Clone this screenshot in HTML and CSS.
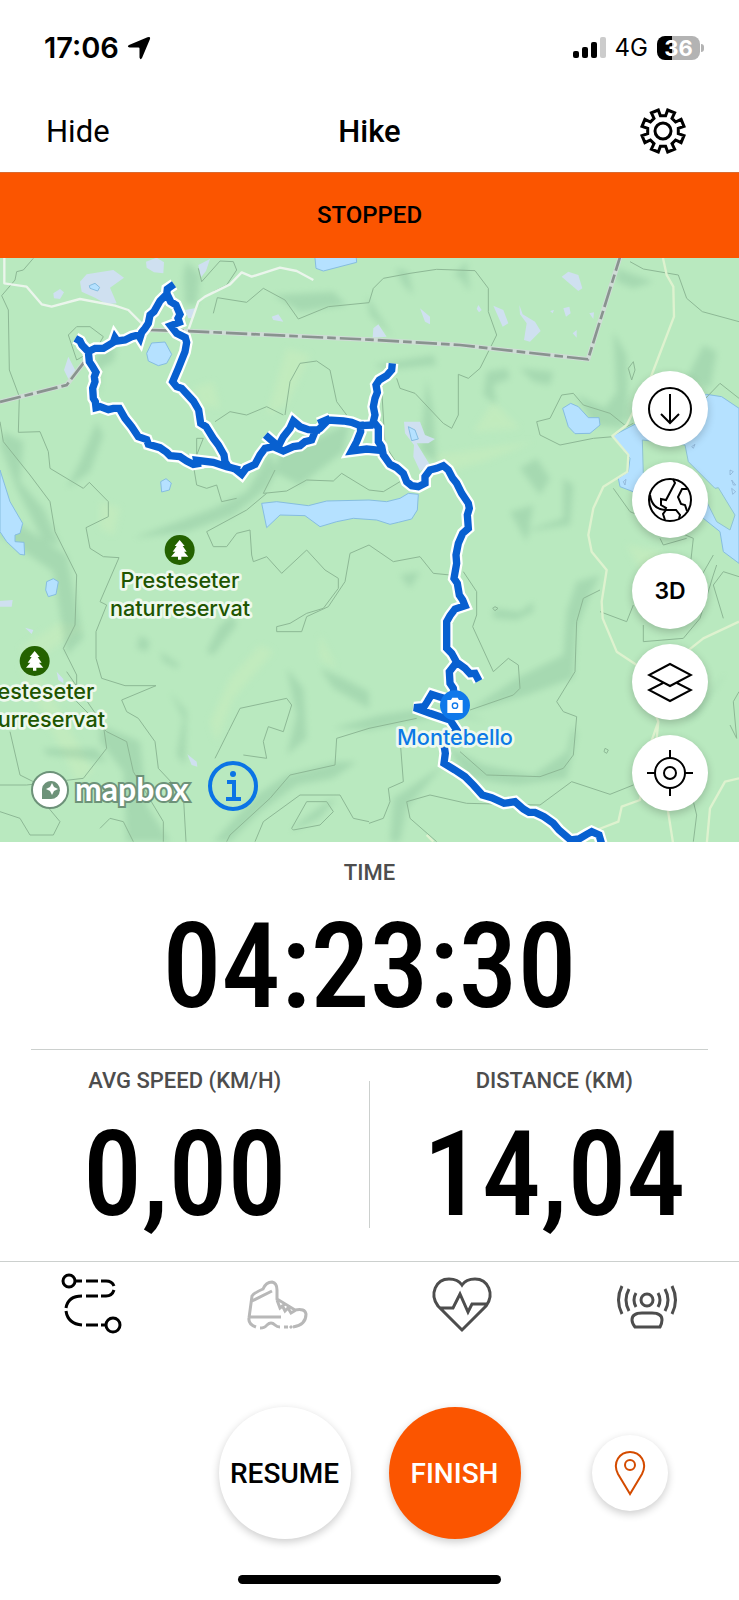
FILE: index.html
```html
<!DOCTYPE html>
<html lang="en">
<head>
<meta charset="utf-8">
<meta name="viewport" content="width=device-width, initial-scale=1">
<title>Hike</title>
<link rel="stylesheet" href="styles.css">
</head>
<body>
<div class="app">
  <div class="status">
    <div class="status-group">
      <span class="clock">17:06</span>
      <svg class="location" viewBox="0 0 24 24" aria-hidden="true"><path d="M20.500 1.200Q24 0 22.800 3.500L15 22Q13.500 24.500 12.500 21.500V12.500Q12.500 11.500 11.500 11.500H2.500Q-.500 10.500 2 9Z"/></svg>
    </div>
    <div class="status-group status-right">
      <svg class="signal" viewBox="0 0 33 22" aria-hidden="true"><rect y="14" width="6" height="7" rx="2"/><rect x="9" y="10" width="6" height="11" rx="2"/><rect x="18" y="5" width="6" height="16" rx="2"/><rect class="weak" x="27" y="0" width="6" height="21" rx="2"/></svg>
      <span class="network">4G</span>
      <span class="battery"><span class="battery-level">36</span></span>
    </div>
  </div>

  <header class="nav">
    <button class="hide" type="button">Hide</button>
    <h1>Hike</h1>
    <button class="settings" type="button" aria-label="Settings">
      <svg viewBox="-23 -23 46 46"><path d="M15.300 2.600 21 4.700 18.100 11.600 12.600 9 9 12.600 11.600 18.100 4.700 21 2.600 15.300H-2.600L-4.700 21-11.600 18.100-9 12.600-12.600 9-18.100 11.600-21 4.700-15.300 2.600V-2.600L-21-4.700-18.100-11.600-12.600-9-9-12.600-11.600-18.100-4.700-21-2.600-15.300H2.600L4.700-21 11.600-18.100 9-12.600 12.600-9 18.100-11.600 21-4.700 15.300-2.600Z"/><circle r="8"/></svg>
    </button>
  </header>

  <div class="banner" role="status">STOPPED</div>

  <section class="map" aria-label="Map">
    <svg class="map-art" viewBox="0 9 2217 1752" preserveAspectRatio="xMidYMid slice">
      <defs>
        <filter id="soft" x="-20%" y="-20%" width="140%" height="140%"><feGaussianBlur stdDeviation="9"/></filter>
        <path id="route" d="M226 250 240 258 246 270 265 290 268 320 276 332 288 352 283 365 285 380 278 400 280 430 286 440 288 458 300 455 325 464 340 460 358 460 375 490 395 515 415 545 440 554 445 568 480 578 500 592 510 602 540 605 560 618 580 628 592 626 590 616 640 622 680 635 720 645M265 290 285 280 310 280 340 262 345 248 352 258 375 255 395 245 415 240 420 248 425 232 435 220 445 205 450 180 462 170 480 138 500 118 502 102 522 88M500 115 512 140 528 150 540 178 534 190 538 202 512 212 530 235 556 248 560 262 555 290 535 340 518 380 530 395 545 400 580 438 596 465 602 505 618 515 640 550 655 570 672 600 675 620 685 635 705 642 725 658 738 640 765 628 780 600 795 580 820 575 850 588 880 575 900 572 915 560 935 555 945 530 960 520 985 495 1030 498 1055 502 1080 512 1120 510M796 540 835 574 850 545 870 520 880 498 900 515 925 524 960 525M955 505 990 490M1080 500 1082 530 1070 560 1055 588 1100 582 1140 586M1177 325 1175 345 1160 362 1138 375 1128 390 1132 412 1125 430 1120 455 1125 480 1120 500 1135 518 1135 560 1145 575 1150 600 1170 628 1190 638 1210 655 1220 680 1235 692 1255 695 1275 685 1275 665 1290 645 1310 640 1330 632 1345 645 1358 670 1370 685 1385 715 1405 745 1408 760 1402 780 1405 820 1388 835 1375 865 1368 900 1370 925 1362 970 1372 985 1378 1020 1388 1035 1395 1052 1365 1062 1350 1082 1340 1100 1340 1180 1355 1195 1370 1222 1348 1250 1350 1285 1360 1300 1365 1340M1370 1222 1395 1240 1410 1256 1425 1255 1437 1278M1350 1335 1317 1325 1295 1318 1282 1340 1272 1355 1243 1358 1290 1375 1350 1395 1370 1425 1332 1470 1336 1495 1332 1525 1365 1545 1395 1565 1420 1590 1447 1620 1475 1628 1512 1645 1545 1640 1570 1662 1587 1672 1605 1672 1632 1685 1660 1705 1677 1725 1712 1755 1737 1752 1760 1738 1775 1730 1797 1740 1806 1770"/>
        <g id="tree"><circle r="45" class="park-dot"/><path class="park-tree" d="M0-30 15-12H9L21 5H13L26 20H5V29H-5V20H-26L-13 5H-21L-9-12H-15Z"/></g>
      </defs>
      <rect class="land" y="0" width="2217" height="1770"/>

      <g class="light" filter="url(#soft)">
        <path d="M860 280 930 300 860 450 800 480ZM580 400 640 380 660 460 600 450ZM180 1100 250 1120 100 1220 60 1180ZM60 1230 120 1260 280 1550 230 1580ZM1300 600 1600 560 1450 620 1340 650ZM780 1170 820 1190 700 1330 650 1460 630 1400 690 1270ZM960 1140 1010 1240 960 1210ZM300 740 360 760 340 840 300 820ZM1880 870 1990 890 1930 960ZM1480 440 1560 520 1420 530Z"/>
      </g>
      <g class="shade" filter="url(#soft)">
        <path d="M810 590 830 650 800 700 700 780 560 830 400 850 480 820 640 760 740 710Z"/>
        <path d="M840 590 930 560 1050 500 1030 590 900 690 820 650Z"/>
        <path d="M290 500 310 540 270 650 200 700 240 620Z"/>
        <path d="M350 270 340 320 300 340 300 420 280 360 290 290Z"/>
        <path d="M1100 120 1180 250 1110 180ZM1185 40 1225 50 1240 120 1210 90ZM1840 230 1880 300 1885 500 1800 480 1850 410Z"/>
        <path d="M1360 60 1400 20 1410 110 1380 70ZM1120 330 1300 300 1310 330 1160 345ZM1310 620 1260 590 1280 370 1300 470Z"/>
        <path d="M1460 350 1520 340 1530 370 1480 390 1490 450 1450 420ZM1560 340 1660 350 1650 390 1600 380ZM1730 420 1840 470 1880 520 1780 510Z"/>
        <path d="M1560 640 1610 610 1650 670 1620 720ZM1690 670 1720 690 1710 810 1570 830 1690 790ZM1530 770 1600 750 1580 860Z"/>
        <path d="M1730 980 1800 960 1770 1020 1730 1120 1720 1270 1580 1320 1400 1370 1550 1270 1690 1200 1700 1070Z"/>
        <path d="M1480 1060 1560 1070 1600 1040 1600 1070 1550 1095 1480 1090ZM1460 1400 1380 1370 1107 1425 1000 1420 1140 1380 1280 1360Z"/>
        <path d="M1340 1470 1450 1530 1600 1560 1700 1490 1720 1410 1730 1440 1700 1570 1550 1590 1400 1570Z"/>
        <path d="M1330 1530 1220 1660 1200 1760 1170 1760 1180 1630Z"/>
        <path d="M1010 1520 1070 1520 1000 1570 890 1590 780 1670 690 1760 640 1760 770 1620 860 1560Z"/>
        <path d="M1010 1630 960 1690 870 1730 900 1700 980 1640ZM860 1240 910 1300 920 1450 860 1500 890 1380ZM960 1240 1030 1270 1107 1310 1107 1360 1000 1300Z"/>
        <path d="M510 1310 560 1370 555 1530 530 1500 550 1390ZM300 1410 420 1460 440 1650 510 1760 380 1760 370 1550 300 1460ZM0 770 200 900 250 1150 200 1200 160 950 0 840Z"/>
        <path d="M10 530 70 560 60 680 130 760 180 870 130 860 50 700 0 570ZM700 1080 710 1110 640 1200 620 1190 660 1110ZM420 1140 450 1160 440 1190 410 1180ZM480 1190 540 1230 530 1240 490 1220ZM130 1480 290 1480 320 1520 140 1500Z"/>
        <path d="M1850 40 1960 80 1900 100 1850 80ZM2110 270 2150 290 2130 400 2060 370ZM2180 1250 2090 1380 2050 1400 2130 1310ZM1200 960 1260 950 1230 1000ZM820 120 1000 110 1040 150 900 170ZM560 20 600 60 590 150 555 150 550 60Z"/>
      </g>

      <g class="wetland">
        <path d="M438 20 470 8 492 22 490 55 462 52 440 38ZM160 115 180 102 192 112 180 132 162 130ZM240 80 260 58 340 45 372 68 330 98 350 145 320 148 285 128 245 110ZM595 30 630 12 618 48 602 68ZM555 165 585 160 582 188 565 190ZM815 185 835 178 850 200 820 195ZM205 305 228 350 205 372 192 345Z"/>
        <path d="M1260 160 1290 185 1290 208 1275 200ZM1120 220 1135 208 1160 245 1118 248ZM1435 150 1445 165 1437 172 1430 162ZM1480 152 1510 165 1525 205 1508 215ZM1558 150 1568 178 1605 200 1622 228 1590 260 1572 255 1580 205 1560 178ZM1690 160 1708 155 1712 175 1698 185ZM1768 175 1782 172 1780 192ZM1718 235 1730 225 1730 248ZM1685 65 1705 50 1735 60 1747 100 1735 108ZM1650 168 1662 165 1658 175Z"/>
        <path d="M1212 500 1260 500 1275 540 1305 552 1285 565 1250 565 1290 630 1260 648 1240 605 1242 570 1215 535ZM0 1038 38 1035 35 1055 0 1055ZM75 1118 100 1125 95 1137ZM562 1498 590 1520 592 1535 575 1530ZM170 1250 190 1272 190 1285 175 1275Z"/>
      </g>
      <g class="water">
        <path d="M440 295 455 264 495 261 515 298 500 325 475 332 445 318ZM945 10 948 40 970 48 1070 22 1068 0 945 0ZM268 92 285 85 299 97 293 108 270 100ZM482 680 498 671 514 684 508 705 485 711ZM785 745 830 740 925 752 980 738 1107 735 1160 740 1200 730 1225 715 1255 718 1252 765 1235 792 1195 802 1170 808 1130 795 1060 790 1010 800 960 815 915 782 840 780 800 818Z"/>
        <path d="M0 645 30 740 68 805 60 835 45 840 45 860 72 862 74 900 60 898 20 860 0 830ZM140 980 160 971 175 980 168 1018 145 1025 137 1005ZM1688 460 1712 445 1735 455 1765 488 1797 488 1800 510 1770 535 1725 536 1705 515ZM1225 515 1245 525 1255 552 1235 557Z"/>
        <path d="M1837 543 1920 500 2120 418 2165 425 2217 460V925L2170 890 2160 830 2110 790 1990 745 1860 695 1855 670 1885 650 1890 610Z"/>
      </g>
      <path class="land shore" d="M1927 555 2055 570 2065 620 2145 700 2155 698 2205 780 2190 825 2150 800 2120 740 2000 760 1930 660Z"/>
      <g class="islet"><path d="M2190 645 2200 650 2190 660ZM2195 675 2207 690 2200 690ZM2195 700 2207 710 2198 718ZM2075 575 2085 568 2080 580ZM1870 680 1878 673 1875 690Z"/></g>

      <g class="contour">
        <path d="M100 10 70 45 50 50 45 75 5 122 25 165 28 345 58 425 55 532 120 530 145 590 150 640 250 700 268 682 325 740 325 785 258 818 270 880 310 905 357 908 300 1040 320 1050 288 1130 288 1210 305 1270 375 1292 468 1292 365 1335 380 1370 415 1390 465 1460 475 1540 550 1620 558 1760"/>
        <path d="M640 175 652 128 740 142 790 100 855 135 895 192 985 155 1107 143 1120 100 1150 70 1230 55 1310 43 1425 47 1465 100 1465 170 1490 240 1440 340 1405 370 1375 358 1375 480 1355 520 1330 505 1245 415 1200 400 1190 370"/>
        <path d="M595 40 605 80 660 18 700 20 710 45 680 90 640 110M205 240 230 215 270 215 310 245 290 280 230 315ZM855 480 870 380 900 325 950 318 990 345 1010 440 1040 480M1145 400 1155 570 1200 640M645 500 690 470 740 480 800 455 850 480M590 600 610 550 590 550ZM580 630 590 690 620 700 650 690 665 740 710 730"/>
        <path d="M825 645 790 715 860 708 920 675 1000 678 1025 655 1107 705 1150 710 1200 680M800 715 740 765 620 830 640 875 680 875 710 835 750 825 755 900 760 920 800 905 845 955 920 885 975 945 1015 970 1015 1000 970 1060 920 1075 870 1105 830 1115 830 1130 905 1130 920 1085 985 1055 1035 980 1050 895 1107 870 1180 920 1260 905 1300 955 1350 960M1390 950 1430 1010 1430 1080 1418 1115 1480 1250 1525 1210 1555 1230 1560 1300 1540 1320 1410 1365M1107 1420 1250 1390"/>
        <path d="M645 1510 685 1430 720 1360 860 1330 875 1350 850 1430 805 1415 790 1460 800 1510 730 1500M1107 1420 1010 1450 1005 1530 870 1560 810 1630 690 1740 680 1760M875 1720 920 1640 980 1640 1000 1670 960 1710 880 1725ZM765 1760 790 1700 900 1620 1020 1620 1060 1690 1107 1700M300 1720 330 1690 370 1700 400 1760M30 1430 60 1560 120 1590M0 1590 80 1590 250 1570 320 1480 310 1410 200 1250M0 1670 60 1690 90 1740 160 1740 180 1700 130 1640M0 500 10 560 90 660 150 740 165 830 200 900 230 960 225 1110 190 1180 230 1260 230 1340 320 1430 380 1460 400 1550 490 1700 490 1760"/>
        <path d="M1610 500 1650 490 1685 420 1720 415 1750 450 1830 475 1880 515 1900 505M1610 500 1620 540 1680 570 1780 550 1840 545M1890 20 1930 42 2035 60 2060 130 2107 170 2217 200M2107 440 2160 385 2217 430M1900 320 1885 340 1895 375 1905 345ZM1840 700 1890 770 2080 850 2070 940 2100 970 2140 900M1980 850 1990 870 2060 850M1800 1005 1750 1030 1730 1100 1725 1250 1670 1340 1690 1370 1730 1385 1720 1500 1690 1540 1620 1565 1460 1560 1380 1490M1800 1070 1880 1100 1900 1050M1310 1760 1230 1690 1220 1640 1290 1620 1400 1645 1620 1650 1715 1580 1830 1618 1900 1590M1107 1705 1150 1690 1170 1640 1165 1600 1210 1580 1200 1450M2217 1310 2200 1340 2210 1450 2190 1410M2070 1600 2090 1680 2080 1760M1930 1110 1930 1160 2050 1150 2100 1090 2140 960 2150 930M2170 1090 2140 990 2170 950 2217 965M1485 1055 1494 1060 1485 1067 1478 1060ZM1815 1480 1825 1485 1820 1495 1812 1490Z"/>
      </g>
      <g class="road">
        <path d="M13 0V85L80 95 125 148 155 155 240 132 345 152 385 165 425 205 450 215M565 225 595 140 615 125 690 88 725 52 755 65 840 38 890 48 940 75"/>
        <path class="pale" d="M1987 0 2000 60 2020 95 2022 185 1955 360 1880 510 1837 543 1885 600 1882 650 1810 695 1780 760 1765 840 1775 890 1820 945 1805 1040 1808 1090 1850 1190 1910 1230 1975 1400 1970 1450 2020 1770M2060 1190 2110 1150 2217 1100M1975 1400 1940 1500 1920 1635 1865 1655 1855 1700 1790 1725M2217 1570 2175 1580 2130 1660 2120 1770M1280 1740 1300 1760"/>
      </g>
      <path class="border-halo" d="M0 441 200 390 265 305M450 225 560 228 1107 254 1380 270 1764 313 1862 0"/>
      <path class="border" d="M0 441 200 390 265 305M450 225 560 228 1107 254 1380 270 1764 313 1862 0"/>

      <use class="route-halo" href="#route"/>
      <use class="route-line" href="#route"/>

      <use href="#tree" x="539" y="885"/>
      <use href="#tree" x="104" y="1218"/>
      <g class="park-label">
        <text x="540" y="1000">Presteseter</text>
        <text x="540" y="1082">naturreservat</text>
        <text x="105" y="1333">Presteseter</text>
        <text x="105" y="1415">naturreservat</text>
      </g>
      <circle class="photo-dot" cx="1365" cy="1351" r="45"/>
      <path class="photo" d="M1342 1335H1353L1357 1328H1373L1377 1335H1388V1374H1342Z"/>
      <circle class="photo-lens" cx="1365" cy="1352" r="8"/>
      <text class="place-label" x="1365" y="1469">Montebello</text>
    </svg>

    <div class="map-credits">
      <svg class="mapbox-mark" viewBox="0 0 38 38" aria-hidden="true"><circle cx="19" cy="19" r="18"/><path d="M11 28V18A9 9 0 1 1 20 28Z"/><path class="spark" d="M21 12 23 16 27 18 23 20 21 24 19 20 15 18 19 16Z"/></svg>
      <span class="mapbox-name">mapbox</span>
      <button class="info" type="button" aria-label="Map information">
        <svg viewBox="0 0 52 52"><circle cx="26" cy="26" r="23"/><circle class="dot" cx="26" cy="14" r="3"/><path d="M20 22H27V39M19 39H34"/></svg>
      </button>
    </div>

    <div class="map-controls">
      <button class="round" type="button" aria-label="Download"><svg viewBox="0 0 46 46"><circle cx="23" cy="23" r="21"/><path d="M23 8V37M14 28 23 37 32 28"/></svg></button>
      <button class="round" type="button" aria-label="Map style"><svg viewBox="0 0 46 46"><circle cx="23" cy="23" r="21"/><path d="M26 2 28 6 19 23 14 22V28L19 31 18 33Q5 32 3 18M19 33 16 37 18 43M19 33 29 33 33 38 32 42M40 12 35 12 31 20 34 27 38 28 40 34"/></svg></button>
      <button class="round" type="button">3D</button>
      <button class="round" type="button" aria-label="Layers"><svg viewBox="0 0 46 46"><path d="M23 5 44 16 23 27 2 16ZM16 24 2 31 23 42 44 31 30 24"/></svg></button>
      <button class="round" type="button" aria-label="Locate me"><svg viewBox="0 0 46 46"><circle cx="23" cy="23" r="15"/><circle cx="23" cy="23" r="6"/><path d="M23 0V8M23 38V46M0 23H8M38 23H46"/></svg></button>
    </div>
  </section>

  <section class="stats">
    <div class="stat stat-time">
      <h2>TIME</h2>
      <p>04:23:30</p>
    </div>
    <div class="stat-row">
      <div class="stat"><h2>AVG SPEED (KM/H)</h2><p>0,00</p></div>
      <div class="stat"><h2>DISTANCE (KM)</h2><p>14,04</p></div>
    </div>
  </section>

  <nav class="tabs">
    <button class="tab tab-active" type="button" aria-label="Route"><svg viewBox="0 0 60 60"><circle cx="7" cy="7" r="6"/><circle cx="51" cy="51" r="7"/><path d="M14 7H20M24 7H36M39 7H44Q50 7 52 12M52 16Q50 22 44 22H39M36 22H24M20 22Q6 22 4 34M4 37Q6 50 20 51M24 51H36M39 51H44"/></svg></button>
    <button class="tab tab-off" type="button" aria-label="Gear"><svg viewBox="0 0 60 60"><path d="M9 53Q1 50 2 44L5 22Q7 19 16 15 19 8 25 8 30 9 30 16V25L48 36Q58 34 59 40 59 51 46 53M5 27 25 17M3 43H34M30 26 33 34 38 30M35 31 38 37 42 33M41 34 44 39 49 36M13 54Q18 54 20 51 24 47 28 51 30 53 33 53M37 53H41M43 52 45 54"/></svg></button>
    <button class="tab" type="button" aria-label="Heart rate"><svg viewBox="0 0 60 60"><path d="M30 56 6 32C-3 20 4 5 17 5 24 5 28 8 30 11 32 8 36 5 43 5 56 5 63 20 54 32ZM8 34H21L28 20 36 38 40 30H56"/></svg></button>
    <button class="tab" type="button" aria-label="Beacon"><svg viewBox="0 0 60 60"><circle cx="30" cy="26" r="6"/><path d="M25 39H35Q45 39 45 46 45 49 43 53H18Q15 49 15 46 15 39 25 39ZM19 19Q15 26 19 33M12 15Q6 26 12 37M5 12Q-2 26 5 40M41 19Q45 26 41 33M48 15Q54 26 48 37M55 12Q62 26 55 40"/></svg></button>
  </nav>

  <div class="actions">
    <div class="actions-main">
      <button class="action" type="button">RESUME</button>
      <button class="action action-finish" type="button">FINISH</button>
    </div>
    <button class="round pin" type="button" aria-label="Add waypoint"><svg viewBox="0 0 46 46"><path d="M23 44 11 24C5 12 13 2 23 2S41 12 35 24Z"/><circle cx="23" cy="15" r="5"/></svg></button>
  </div>
  <div class="home-bar"></div>
</div>
</body>
</html>
```
FILE: styles.css
```css
* {
  box-sizing: border-box;
}

body {
  margin: 0;
  background: #fff;
  color: #000;
  font-family: Roboto, "Liberation Sans", sans-serif;
}

button {
  margin: 0;
  padding: 0;
  border: 0;
  background: none;
  color: inherit;
  font: inherit;
  cursor: pointer;
}

svg {
  display: block;
  fill: none;
  stroke: currentColor;
}

h1,
h2,
p {
  margin: 0;
}

.status {
  display: flex;
  align-items: center;
  justify-content: space-between;
  height: 92px;
  padding: 3px 35px 0 44px;
  font-family: Inter, sans-serif;
}

.status-group {
  display: flex;
  align-items: center;
  gap: 8px;
}

.status-right {
  gap: 9px;
}

.clock {
  font-size: 29px;
  font-weight: 600;
}

.location {
  width: 24px;
  height: 24px;
  fill: #000;
  stroke: none;
}

.signal {
  width: 33px;
  height: 22px;
  fill: #000;
  stroke: none;
}

.signal .weak {
  fill: #ccc;
}

.network {
  font-size: 24px;
}

.battery {
  display: flex;
  align-items: center;
  gap: 1px;
}

.battery-level {
  width: 43px;
  border-radius: 8px;
  background: linear-gradient(90deg, #000 36%, #b3b3b3 36%);
  color: #fff;
  font-size: 22px;
  font-weight: 700;
  line-height: 24px;
  text-align: center;
}

.battery::after {
  width: 3px;
  height: 8px;
  border-radius: 0 3px 3px 0;
  background: #b3b3b3;
  content: "";
}

.nav {
  display: grid;
  grid-template-columns: 1fr auto 1fr;
  align-items: center;
  height: 80px;
  padding: 0 46px 2px;
  font-size: 31px;
}

.hide {
  justify-self: start;
}

.nav h1 {
  font-size: 31px;
  font-weight: 500;
}

.settings {
  justify-self: end;
  margin-right: 7px;
}

.settings svg {
  width: 46px;
  height: 46px;
  stroke-width: 3;
}

.banner {
  border-top: 1px solid #d96a30;
  background: #fb5500;
  font-size: 24px;
  font-weight: 500;
  line-height: 85px;
  text-align: center;
}

.map {
  position: relative;
  overflow: hidden;
  background: #b9e9bf;
}

.map-art {
  width: 100%;
  height: auto;
  stroke: none;
}

.land {
  fill: #b9e9bf;
}

.shore {
  stroke: #8fc3d4;
  stroke-width: 3;
}

.light {
  fill: #c9edbd;
  opacity: .5;
}

.shade {
  fill: #7fb894;
  opacity: .32;
}

.wetland {
  fill: #cfe0f0;
}

.water {
  fill: #b5e1ff;
  stroke: #86bde0;
  stroke-width: 3;
}

.islet {
  stroke: #86a9cc;
  stroke-width: 2;
}

.contour {
  stroke: #8db895;
  stroke-width: 3;
  stroke-linejoin: round;
}

.road {
  stroke: #ebf5ec;
  stroke-width: 7;
  stroke-linejoin: round;
}

.road .pale {
  stroke: #def2cf;
}

.border-halo {
  stroke: #cfdcd6;
  stroke-width: 14;
}

.border {
  stroke: #89938f;
  stroke-width: 8;
  stroke-dasharray: 64 12 26 12;
}

.route-halo {
  stroke: #fff;
  stroke-width: 36;
}

.route-line {
  stroke: #0860d0;
  stroke-width: 22;
}

.park-dot {
  fill: #246200;
}

.park-tree {
  fill: #fff;
}

.park-label,
.place-label {
  font-family: Inter, sans-serif;
  font-size: 65px;
  font-weight: 500;
  text-anchor: middle;
  paint-order: stroke;
  stroke: #eef9ee;
  stroke-width: 16;
  stroke-linejoin: round;
}

.park-label {
  fill: #205500;
}

.place-label {
  fill: #0c7ae6;
}

.photo-dot {
  fill: #0f78ea;
}

.photo {
  fill: #fff;
}

.photo-lens {
  stroke: #0f78ea;
  stroke-width: 4;
}

.map-credits {
  position: absolute;
  bottom: 30px;
  left: 31px;
  display: flex;
  align-items: center;
}

.mapbox-mark {
  width: 38px;
  height: 38px;
  margin-top: 8px;
  fill: #fff;
  stroke: #6d9279;
  stroke-width: 2;
}

.mapbox-mark path {
  fill: #6d9279;
  stroke: none;
}

.mapbox-mark .spark {
  fill: #fff;
}

.mapbox-name {
  margin: 4px 18px 0 6px;
  color: #fff;
  font-family: Lato, sans-serif;
  font-size: 32px;
  font-weight: 700;
  -webkit-text-stroke: 4px #6d9279;
  paint-order: stroke;
}

.info {
  color: #0b74e5;
}

.info svg {
  width: 52px;
  height: 52px;
  stroke-width: 4;
}

.info .dot {
  fill: currentColor;
  stroke: none;
}

.map-controls {
  position: absolute;
  right: 31px;
  bottom: 31px;
  display: grid;
  gap: 15px;
}

.round {
  display: grid;
  place-items: center;
  width: 76px;
  height: 76px;
  border-radius: 50%;
  background: #fff;
  box-shadow: 0 3px 8px rgba(0, 0, 0, .2);
  font-family: Inter, sans-serif;
  font-size: 23px;
  font-weight: 600;
}

.round svg {
  width: 46px;
  height: 46px;
  stroke-width: 2;
}

.stats {
  border-bottom: 1px solid #ccd0ce;
}

.stat {
  padding: 19px 0 26px;
  text-align: center;
}

.stat h2 {
  color: #4d4d4d;
  font-size: 22px;
  font-weight: 500;
  line-height: 24px;
}

.stat p {
  margin-top: 22px;
  font-family: "Roboto Condensed", "Liberation Sans Narrow", sans-serif;
  font-size: 118px;
  font-weight: 500;
  line-height: 120px;
}

.stat-time {
  margin: 0 31px;
  padding-bottom: 22px;
  border-bottom: 1px solid #ccd0ce;
}

.stat-row {
  position: relative;
  display: grid;
  grid-template-columns: 1fr 1fr;
}

.stat-row::before {
  position: absolute;
  top: 31px;
  bottom: 33px;
  left: 50%;
  width: 1px;
  margin-left: -1px;
  background: #ccd0ce;
  content: "";
}

.tabs {
  display: grid;
  grid-template-columns: repeat(4, 1fr);
  padding: 12px 0;
}

.tab {
  display: grid;
  place-items: center;
  color: #4d4d4d;
}

.tab svg {
  width: 60px;
  height: 60px;
  overflow: visible;
  stroke-width: 3;
}

.tab.tab-active {
  color: #000;
}

.tab.tab-off {
  color: #b8b8b8;
}

.actions {
  display: grid;
  grid-template-columns: 1fr auto 1fr;
  align-items: center;
  margin-top: 61px;
}

.actions-main {
  display: flex;
  grid-column: 2;
  gap: 38px;
}

.action {
  width: 132px;
  height: 132px;
  border-radius: 50%;
  background: #fff;
  box-shadow: 0 3px 8px rgba(0, 0, 0, .2);
  font-size: 28px;
  font-weight: 500;
}

.action-finish {
  background: #fb5500;
  color: #fff;
}

.pin {
  justify-self: center;
  color: #d44b00;
}

.home-bar {
  width: 263px;
  height: 9px;
  margin: 36px auto 15px;
  border-radius: 5px;
  background: #000;
}
```
